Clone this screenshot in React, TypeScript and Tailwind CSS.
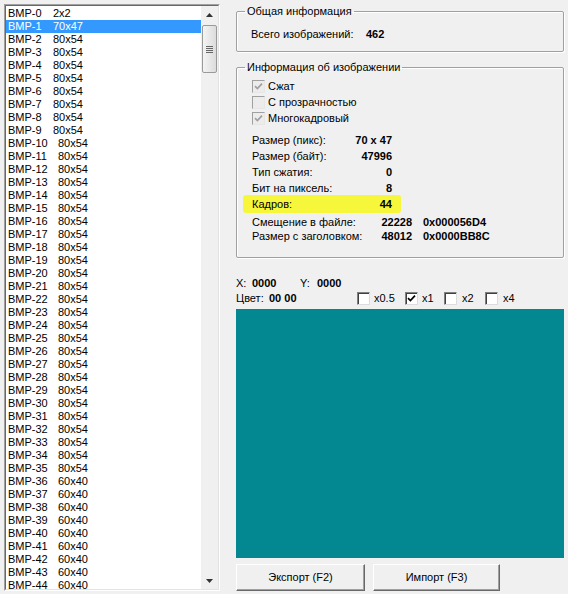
import React from "react";

const items = Array.from({ length: 45 }, (_, i) => ({
  name: `BMP-${i}`,
  size: i === 0 ? "2x2" : i === 1 ? "70x47" : i <= 35 ? "80x54" : "60x40",
}));

function Check({ checked, disabled }: { checked?: boolean; disabled?: boolean }) {
  return (
    <span
      className={`flex h-[13px] w-[13px] shrink-0 items-center justify-center border ${
        disabled
          ? "border-t-[#a0a0a0] border-l-[#a0a0a0] border-r-[#e6e6e6] border-b-[#e6e6e6] bg-[#ececec]"
          : "border-t-[#808080] border-l-[#808080] border-r-[#dcdcdc] border-b-[#dcdcdc] bg-white shadow-[inset_1px_1px_0_#404040]"
      }`}
    >
      {checked && (
        <svg viewBox="0 0 9 9" className="h-[9px] w-[9px]">
          <path
            d="M1 4.2 L3.4 6.6 L8 1.6"
            fill="none"
            stroke={disabled ? "#a0a0a0" : "#000"}
            strokeWidth="1.7"
          />
        </svg>
      )}
    </span>
  );
}

function Group({ title, className, children }: { title: string; className?: string; children: React.ReactNode }) {
  return (
    <fieldset
      className={`m-0 min-w-0 rounded-[2px] border border-[#a0a0a0] p-0 shadow-[inset_1px_1px_0_white,1px_1px_0_white] ${className ?? ""}`}
    >
      <legend className="ml-[8px] px-[2px] leading-[13px]">{title}</legend>
      {children}
    </fieldset>
  );
}

function InfoRow({ label, value }: { label: string; value: string }) {
  return (
    <div className="flex h-[16px] w-[140px] items-center justify-between leading-[13px]">
      <span>{label}</span>
      <span className="font-bold">{value}</span>
    </div>
  );
}

export default function App() {
  return (
    <div className="flex h-[594px] w-[568px] overflow-hidden bg-[#f0f0f0] font-['Liberation_Sans',Arial,sans-serif] text-[11px] text-black">
      {/* list box */}
      <div className="ml-[4px] mt-[4px] h-[587px] w-[216px] border border-t-[#a0a0a0] border-l-[#a0a0a0] border-r-white border-b-white">
        <div className="flex h-full border border-t-[#696969] border-l-[#696969] border-r-[#e3e3e3] border-b-[#e3e3e3] bg-white">
          <div className="w-[195px] overflow-hidden pt-[1px]">
            {items.map((it, i) => (
              <div
                key={it.name}
                className={`flex h-[13px] items-center whitespace-nowrap pl-[2px] leading-[13px] ${
                  i === 1 ? "bg-[#3399ff] text-white" : ""
                }`}
              >
                <span className={i < 10 ? "w-[45px]" : "w-[50px]"}>{it.name}</span>
                <span>{it.size}</span>
              </div>
            ))}
          </div>
          <div className="flex w-[17px] flex-col items-center bg-[#f0f0f0]">
            <div className="flex h-[17px] w-full items-center justify-center">
              <svg viewBox="0 0 7 4" className="h-[4px] w-[7px]">
                <path d="M0 4 L3.5 0 L7 4 Z" fill="#333" />
              </svg>
            </div>
            <div className="mt-[2px] flex h-[48px] w-[15px] items-center justify-center rounded-[2px] border border-[#9a9a9a] bg-gradient-to-r from-[#f4f4f4] to-[#dcdcdc]">
              <div className="flex flex-col gap-[1px]">
                <span className="h-[1px] w-[7px] bg-[#666]" />
                <span className="h-[1px] w-[7px] bg-[#666]" />
                <span className="h-[1px] w-[7px] bg-[#666]" />
                <span className="h-[1px] w-[7px] bg-[#666]" />
              </div>
            </div>
            <div className="flex-1" />
            <div className="flex h-[17px] w-full items-center justify-center">
              <svg viewBox="0 0 7 4" className="h-[4px] w-[7px]">
                <path d="M0 0 L7 0 L3.5 4 Z" fill="#333" />
              </svg>
            </div>
          </div>
        </div>
      </div>

      {/* right side */}
      <div className="ml-[16px] flex w-[328px] flex-col">
        <Group title="Общая информация" className="mt-[5px] h-[47px]">
          <div className="flex pl-[14px] pt-[10px] leading-[13px]">
            <span className="w-[115px]">Всего изображений:</span>
            <span className="font-bold">462</span>
          </div>
        </Group>

        <Group title="Информация об изображении" className="mt-[9px] h-[197px]">
          <div className="pl-[15px] pt-[4px]">
            <div className="flex h-[16px] items-center gap-[3px]">
              <Check checked disabled />
              <span>Сжат</span>
            </div>
            <div className="flex h-[16px] items-center gap-[3px]">
              <Check disabled />
              <span>С прозрачностью</span>
            </div>
            <div className="flex h-[16px] items-center gap-[3px]">
              <Check checked disabled />
              <span>Многокадровый</span>
            </div>

            <div className="mt-[6px]">
              <InfoRow label="Размер (пикс):" value="70 x 47" />
              <InfoRow label="Размер (байт):" value="47996" />
              <InfoRow label="Тип сжатия:" value="0" />
              <InfoRow label="Бит на пиксель:" value="8" />
              <div className="relative w-[140px]">
                <span className="absolute -bottom-[1px] -left-[9px] -right-[9px] -top-[1px] rounded-[3px] bg-[#f6f63a]" />
                <div className="relative">
                  <InfoRow label="Кадров:" value="44" />
                </div>
              </div>
            </div>

            <div className="mt-[3px]">
              <div className="flex h-[14px] items-center leading-[13px]">
                <span className="w-[125px]">Смещение в файле:</span>
                <span className="w-[35px] text-right font-bold">22228</span>
                <span className="ml-[11px] font-bold">0x000056D4</span>
              </div>
              <div className="flex h-[14px] items-center leading-[13px]">
                <span className="w-[125px]">Размер с заголовком:</span>
                <span className="w-[35px] text-right font-bold">48012</span>
                <span className="ml-[11px] font-bold">0x0000BB8C</span>
              </div>
            </div>
          </div>
        </Group>

        <div className="mt-[19px] flex h-[13px] items-center leading-[13px]">
          <span className="w-[16px]">X:</span>
          <span className="w-[48px] font-bold">0000</span>
          <span className="w-[17px]">Y:</span>
          <span className="font-bold">0000</span>
        </div>
        <div className="mt-[2px] flex h-[13px] items-center leading-[13px]">
          <span className="w-[33px]">Цвет:</span>
          <span className="w-[88px] font-bold">00 00</span>
          <div className="flex items-center">
            <Check />
            <span className="ml-[4px] w-[31px]">x0.5</span>
            <Check checked />
            <span className="ml-[4px] w-[22px]">x1</span>
            <Check />
            <span className="ml-[5px] w-[23px]">x2</span>
            <Check />
            <span className="ml-[5px]">x4</span>
          </div>
        </div>

        <div className="mt-[4px] h-[249px] w-[328px] bg-[#038891]" />

        <div className="mt-[6px] flex gap-[8px]">
          <button className="h-[27px] w-[129px] border border-t-white border-l-white border-r-[#696969] border-b-[#696969] bg-[#f0f0f0] shadow-[inset_-1px_-1px_0_#a0a0a0]">
            Экспорт (F2)
          </button>
          <button className="h-[27px] w-[127px] border border-t-white border-l-white border-r-[#696969] border-b-[#696969] bg-[#f0f0f0] shadow-[inset_-1px_-1px_0_#a0a0a0]">
            Импорт (F3)
          </button>
        </div>
      </div>
    </div>
  );
}
